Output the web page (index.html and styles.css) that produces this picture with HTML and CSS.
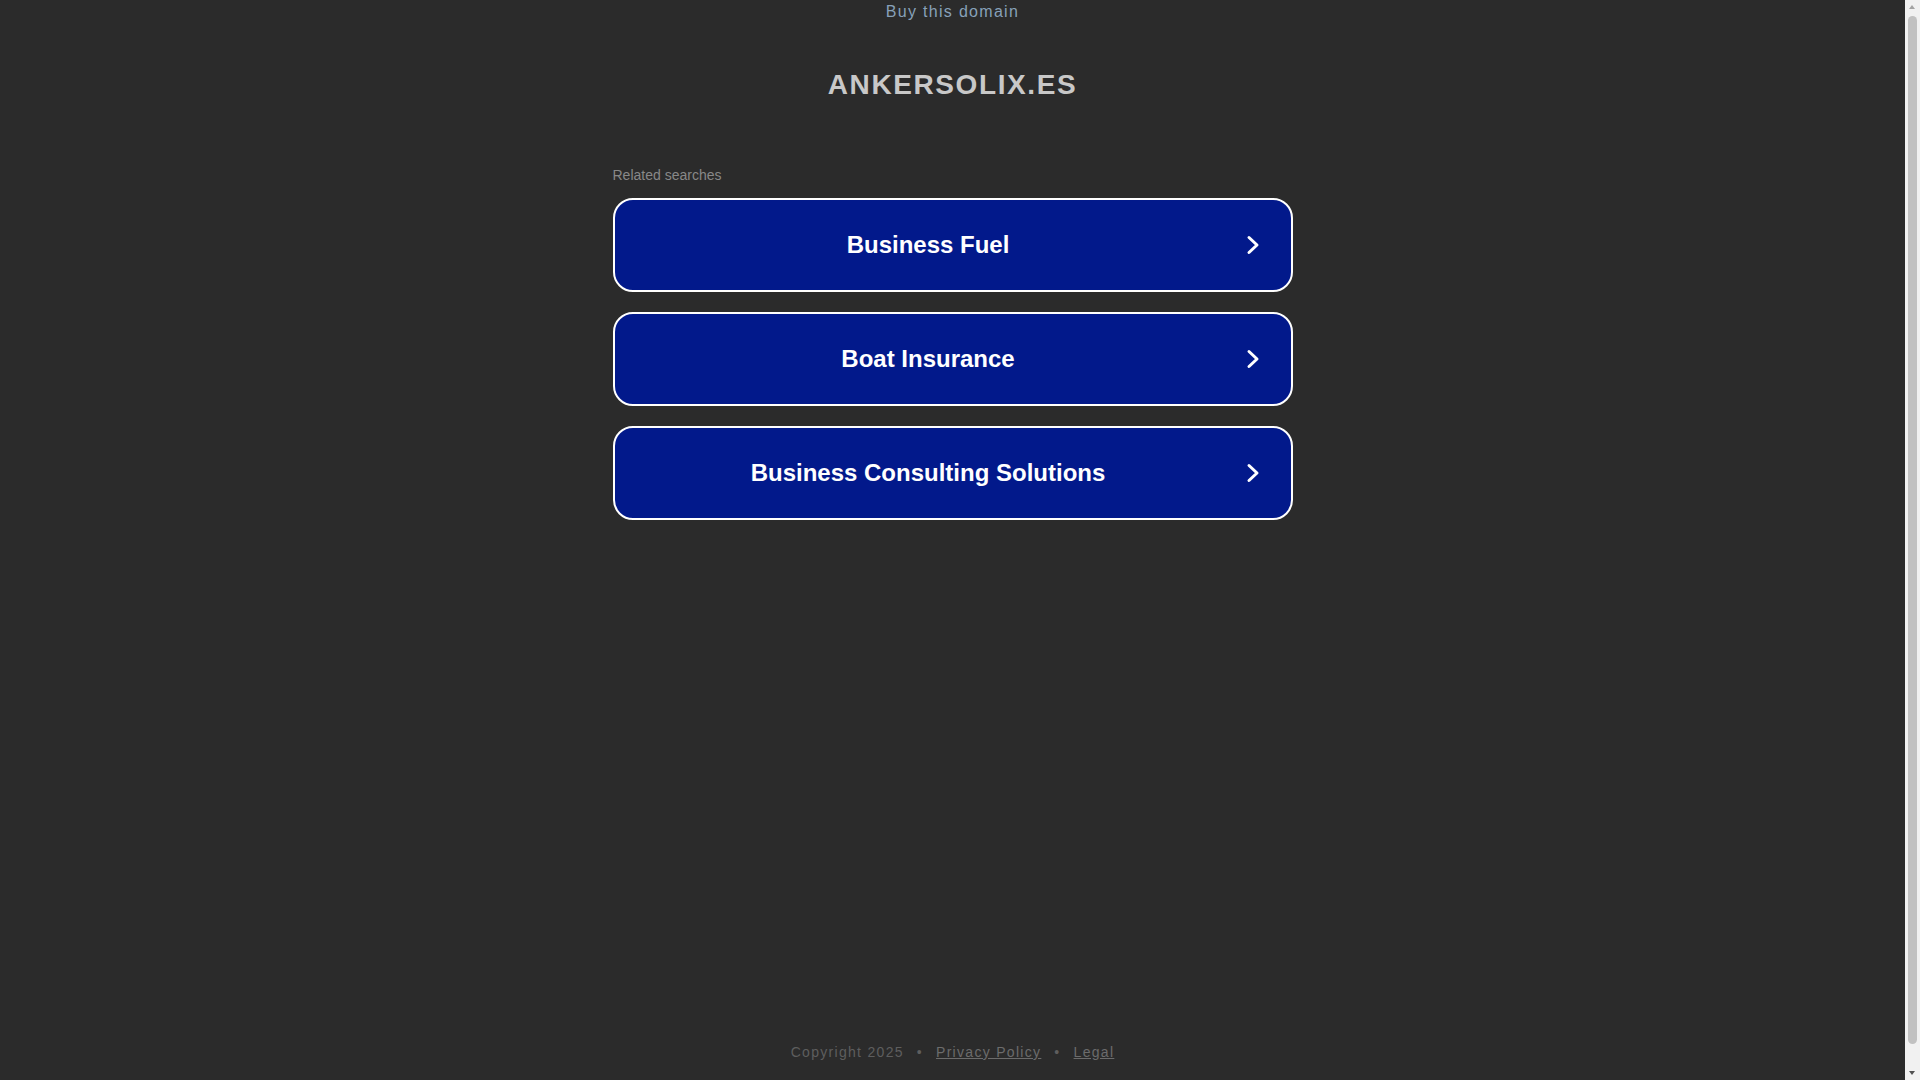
FILE: index.html
```html
<!DOCTYPE html>
<html lang="es">
<head>
<meta charset="utf-8">
<title>ankersolix.es</title>
<link rel="stylesheet" href="styles.css">
</head>
<body>
<div class="page">
  <header class="topbar">
    <a class="buy" href="#">Buy this domain</a>
  </header>
  <main class="content">
    <h1 class="domain">ANKERSOLIX.ES</h1>
    <section class="related">
      <p class="related-title">Related searches</p>
      <ul class="cards">
        <li><a class="card" href="#"><span class="card-text">Business Fuel</span><svg class="chev" viewBox="0 0 24 24" width="24" height="24"><polyline points="7,4.5 15,12 7,19.5" fill="none" stroke="#fff" stroke-width="3" stroke-linecap="round" stroke-linejoin="round"/></svg></a></li>
        <li><a class="card" href="#"><span class="card-text">Boat Insurance</span><svg class="chev" viewBox="0 0 24 24" width="24" height="24"><polyline points="7,4.5 15,12 7,19.5" fill="none" stroke="#fff" stroke-width="3" stroke-linecap="round" stroke-linejoin="round"/></svg></a></li>
        <li><a class="card" href="#"><span class="card-text">Business Consulting Solutions</span><svg class="chev" viewBox="0 0 24 24" width="24" height="24"><polyline points="7,4.5 15,12 7,19.5" fill="none" stroke="#fff" stroke-width="3" stroke-linecap="round" stroke-linejoin="round"/></svg></a></li>
      </ul>
    </section>
  </main>
  <footer class="footer">
    <span class="copy">Copyright 2025</span>
    <span class="dot">•</span>
    <a class="flink" href="#">Privacy Policy</a>
    <span class="dot">•</span>
    <a class="flink" href="#">Legal</a>
  </footer>
</div>
<div class="scrollbar" aria-hidden="true">
  <span class="sb-arrow sb-up"></span>
  <span class="sb-thumb"></span>
  <span class="sb-arrow sb-down"></span>
</div>
</body>
</html>
```

FILE: styles.css
```css
html, body {
  margin: 0;
  padding: 0;
  background: #2b2b2b;
}

body {
  font-family: "Liberation Sans", Arial, sans-serif;
}

.page {
  box-sizing: border-box;
  min-height: calc(100vh + 20px);
  padding-right: 15px;
  display: flex;
  flex-direction: column;
  align-items: center;
}

.topbar {
  padding-top: 2px;
  text-align: center;
}

.buy {
  color: #87a1b9;
  font-size: 16px;
  letter-spacing: 1.3px;
  text-decoration: none;
  line-height: 20px;
}

.content {
  width: 680px;
  display: flex;
  flex-direction: column;
}

.domain {
  margin: 47px 0 0;
  text-align: center;
  color: #c8c8c8;
  font-size: 28px;
  font-weight: bold;
  letter-spacing: 1.6px;
  line-height: 32px;
}

.related-title {
  margin: 66px 0 0;
  color: #888888;
  font-size: 14px;
  line-height: 16px;
}

.cards {
  list-style: none;
  margin: 15px 0 0;
  padding: 0;
  display: flex;
  flex-direction: column;
  gap: 20px;
}

.card {
  box-sizing: border-box;
  height: 94px;
  display: flex;
  align-items: center;
  background: #02198b;
  border: 2px solid #ffffff;
  border-radius: 20px;
  text-decoration: none;
  color: #ffffff;
}

.card-text {
  flex: 1;
  text-align: center;
  font-size: 24px;
  font-weight: bold;
}

.chev {
  flex: none;
  margin-right: 25px;
}

.footer {
  margin-top: auto;
  padding-bottom: 40px;
  font-size: 14px;
  line-height: 16px;
  letter-spacing: 1.3px;
  display: flex;
  align-items: baseline;
}

.copy {
  color: #5e5e5e;
}

.dot {
  color: #5e5e5e;
  margin: 0 13px;
}

.flink {
  color: #6c6c6c;
  text-decoration: underline;
}

/* classic browser scrollbar drawn over the right edge */
.scrollbar {
  position: fixed;
  top: 0;
  right: 0;
  width: 15px;
  height: 100vh;
  background: #f1f1f1;
  display: flex;
  flex-direction: column;
  align-items: center;
}

.sb-arrow {
  flex: none;
  width: 15px;
  height: 15px;
  position: relative;
}

.sb-arrow::before {
  content: "";
  position: absolute;
  left: 4px;
  width: 0;
  height: 0;
  border-left: 3.5px solid transparent;
  border-right: 3.5px solid transparent;
}

.sb-up::before {
  top: 5px;
  border-bottom: 4px solid #a3a3a3;
}

.sb-down::before {
  top: 6px;
  border-top: 4px solid #505050;
}

.sb-thumb {
  flex: 1;
  width: 9px;
  margin: 1px 0 21px;
  border-radius: 5px;
  background: #c1c1c1;
}
```
